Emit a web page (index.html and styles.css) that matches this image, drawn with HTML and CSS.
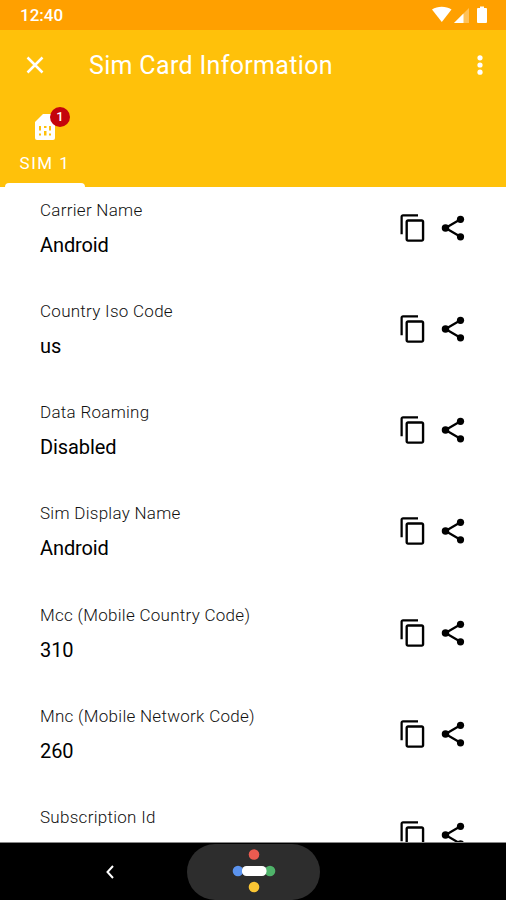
FILE: index.html
```html
<!DOCTYPE html>
<html lang="en">
<head>
<meta charset="utf-8">
<title>Sim Card Information</title>
<link rel="stylesheet" href="styles.css">
</head>
<body>
<svg class="defs" aria-hidden="true">
  <symbol id="copy" viewBox="0 0 24 24"><path d="M16 1H4c-1.100 0-2 .9-2 2v14h1.800V2.800H16V1zm3 4H8c-1.100 0-2 .9-2 2v14c0 1.100.9 2 2 2h11c1.100 0 2-.9 2-2V7c0-1.100-.9-2-2-2zm.1 16.100H7.900V6.900h11.200v14.200z"/></symbol>
  <symbol id="share" viewBox="0 0 24 24"><path d="M6 12 18 5M6 12l12 7" fill="none" stroke="#000" stroke-width="1.800"/><circle cx="18" cy="5" r="2.900"/><circle cx="6" cy="12" r="3"/><circle cx="18" cy="19" r="2.900"/></symbol>
</svg>
<div class="screen">
  <header class="status">
    <span class="clock">12:40</span>
    <svg class="status-icons" viewBox="0 0 58 18">
      <path d="M0 3.500C5.500-.2 14-.2 19.500 3.500L9.800 16z"/>
      <path d="M37 2v15H22z" opacity=".35"/>
      <path d="M31.500 7.500V17H22z"/>
      <path d="M46 2h2V.5h4V2h2q1 0 1 1v13q0 1-1 1h-8q-1 0-1-1V3q0-1 1-1z"/>
    </svg>
  </header>
  <div class="appbar">
    <svg class="close" viewBox="0 0 18 18"><path d="M1.500 1.500l15 15M16.500 1.500l-15 15"/></svg>
    <h1 class="title">Sim Card Information</h1>
    <svg class="more" viewBox="0 0 6 20"><circle cx="3" cy="2.800" r="2.600"/><circle cx="3" cy="10" r="2.600"/><circle cx="3" cy="17.200" r="2.600"/></svg>
  </div>
  <nav class="tabs">
    <div class="tab">
      <div class="sim">
        <svg class="sim-icon" viewBox="0 0 20 26"><path d="M8 0h10q2 0 2 2v22q0 2-2 2H2q-2 0-2-2V8z"/><path class="holes" d="M4 12h2v4.500H4zM9 12h2.500v2H9zM14 12h2v4.500h-2zM4 19.500h2v2H4zM9 17h2.500v4.500H9zM14 19.500h2v2h-2z"/></svg>
        <span class="badge">1</span>
      </div>
      <span class="tab-label">SIM 1</span>
      <div class="indicator"></div>
    </div>
  </nav>
  <main class="list">
    <div class="row"><div class="text"><div class="label">Carrier Name</div><div class="value">Android</div></div><svg class="icon"><use href="#copy"/></svg><svg class="icon"><use href="#share"/></svg></div>
    <div class="row"><div class="text"><div class="label">Country Iso Code</div><div class="value">us</div></div><svg class="icon"><use href="#copy"/></svg><svg class="icon"><use href="#share"/></svg></div>
    <div class="row"><div class="text"><div class="label">Data Roaming</div><div class="value">Disabled</div></div><svg class="icon"><use href="#copy"/></svg><svg class="icon"><use href="#share"/></svg></div>
    <div class="row"><div class="text"><div class="label">Sim Display Name</div><div class="value">Android</div></div><svg class="icon"><use href="#copy"/></svg><svg class="icon"><use href="#share"/></svg></div>
    <div class="row"><div class="text"><div class="label">Mcc (Mobile Country Code)</div><div class="value">310</div></div><svg class="icon"><use href="#copy"/></svg><svg class="icon"><use href="#share"/></svg></div>
    <div class="row"><div class="text"><div class="label">Mnc (Mobile Network Code)</div><div class="value">260</div></div><svg class="icon"><use href="#copy"/></svg><svg class="icon"><use href="#share"/></svg></div>
    <div class="row"><div class="text"><div class="label">Subscription Id</div></div><svg class="icon"><use href="#copy"/></svg><svg class="icon"><use href="#share"/></svg></div>
  </main>
  <footer class="navbar">
    <svg class="back" viewBox="0 0 8 14"><path d="M7 1 1.500 7 7 13"/></svg>
    <div class="pill">
      <svg class="assistant" viewBox="0 0 44 44"><circle cx="22" cy="5.500" r="5.300" fill="#ea5b50"/><circle cx="6" cy="22" r="5.300" fill="#5b93ee"/><circle cx="38" cy="22" r="5.300" fill="#4fb36a"/><circle cx="22" cy="38" r="5.300" fill="#fbc634"/><rect x="10" y="17" width="24.500" height="10" rx="4.500" fill="#fff"/></svg>
    </div>
  </footer>
</div>
</body>
</html>
```
FILE: styles.css
```css
* { box-sizing: border-box; }
body { margin: 0; font-family: Roboto, "Liberation Sans", sans-serif; background: #fff; }
.defs { display: none; }
.screen { width: 506px; height: 900px; display: flex; flex-direction: column; overflow: hidden; }
.status { height: 30px; flex: none; background: #ffa000; display: flex; justify-content: space-between; align-items: flex-start; padding: 6px 16px 0 20px; color: #fff; }
.clock { font-size: 17px; line-height: 19px; font-weight: 500; letter-spacing: 0; }
.status-icons { width: 58px; height: 18px; fill: #fff; }
.appbar { height: 71px; flex: none; background: #ffc10a; display: flex; align-items: center; padding: 0 23px 0 26px; }
.close { width: 18px; height: 18px; margin-top: -1px; fill: none; stroke: #fff; stroke-width: 2.500; }
.title { flex: 1; margin: 0 0 0 45px; font-size: 25px; line-height: 30px; font-weight: 400; letter-spacing: .33px; color: #fff; }
.more { width: 6px; height: 20px; margin-top: -2px; fill: #fff; }
.tabs { height: 86px; flex: none; background: #ffc10a; padding-left: 5px; }
.tab { width: 80px; height: 86px; display: flex; flex-direction: column; align-items: center; padding-top: 13px; }
.sim { position: relative; width: 20px; height: 26px; }
.sim-icon { display: block; width: 20px; height: 26px; fill: #fff; }
.holes { fill: #ffc10a; }
.badge { position: absolute; left: 15px; top: -7px; width: 20px; height: 20px; border-radius: 50%; background: #c4040c; color: #fff; font-size: 13px; line-height: 20px; font-weight: 500; text-align: center; }
.tab-label { margin-top: 13px; font-size: 17px; line-height: 20px; letter-spacing: 1.500px; color: #fff; white-space: nowrap; }
.indicator { width: 80px; height: 4px; margin-top: auto; border-radius: 4px 4px 0 0; background: #fff; }
.list { flex: 1; min-height: 0; overflow: hidden; border-bottom: 1px solid #888; }
.row { height: 101.250px; display: flex; align-items: flex-start; padding: 12.700px 38px 0 40px; }
.text { flex: 1; }
.label { font-size: 17px; line-height: 20px; font-weight: 300; letter-spacing: .28px; color: #111; }
.value { margin-top: 13px; font-size: 20px; line-height: 24px; letter-spacing: -.1px; color: #000; }
.icon { width: 30px; height: 30px; margin: 13px 0 0 10px; fill: #000; }
.navbar { height: 57px; flex: none; background: #000; display: flex; align-items: center; padding-left: 106px; }
.back { width: 8px; height: 14px; fill: none; stroke: #fff; stroke-width: 2; }
.pill { width: 133px; height: 56px; margin: 1px 0 0 73px; border-radius: 28px; background: #2d2d2d; display: flex; align-items: center; justify-content: center; }
.assistant { width: 44px; height: 44px; margin: -2px 0 0 0; }
```
